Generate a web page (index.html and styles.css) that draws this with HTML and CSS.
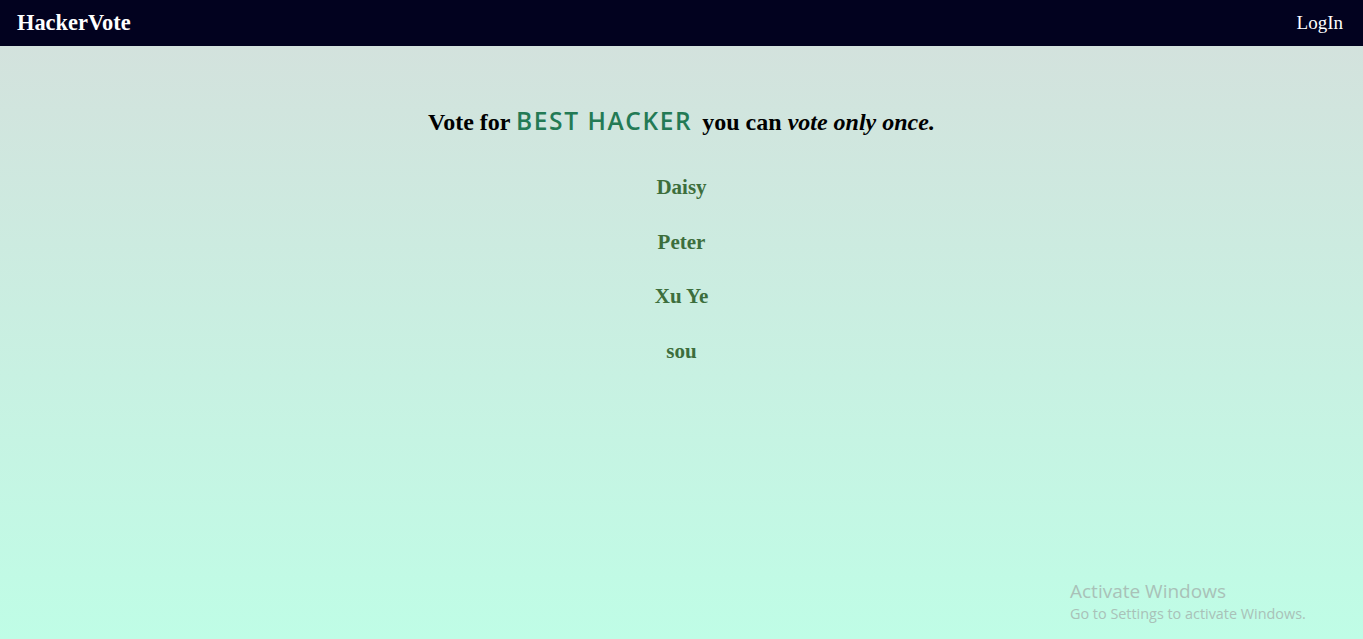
FILE: index.html
```html
<!DOCTYPE html>
<html>
<head>
<meta charset="utf-8">
<link rel="stylesheet" href="styles.css">
</head>
<body>
<nav class="nav">
  <span class="brand">HackerVote</span>
  <span class="login">LogIn</span>
</nav>
<main class="main">
  <h2 class="title">Vote for <span class="best">BEST HACKER</span> you can <em>vote only once.</em></h2>
  <ul class="list">
    <li>Daisy</li>
    <li>Peter</li>
    <li>Xu Ye</li>
    <li>sou</li>
  </ul>
</main>
<div class="activate">
  <div class="a1">Activate Windows</div>
  <div class="a2">Go to Settings to activate Windows.</div>
</div>
</body>
</html>
```
FILE: styles.css
```css
html, body { margin: 0; height: 100%; }
body {
  font-family: "Liberation Serif", "Times New Roman", serif;
  background: linear-gradient(to bottom, #d3e2dd 46px, #bffde6 100%);
  min-height: 639px;
}
.nav {
  height: 46px;
  background: #02021f;
  display: flex;
  align-items: center;
  justify-content: space-between;
  padding: 0 20px 0 17px;
  color: #fff;
  box-sizing: border-box;
}
.brand { font-weight: bold; font-size: 22.4px; }
.login { font-size: 19px; }
.main { text-align: center; padding-top: 58px; }
.title { margin: 0; font-size: 24px; font-weight: bold; color: #000; }
.best {
  font-family: "Comic Sans MS", "Open Sans", sans-serif;
  color: #237a55;
  font-weight: 600;
  font-size: 24.5px;
  letter-spacing: 1.6px;
  margin: 0 4px 0 0;
}
.list { list-style: none; margin: 0; padding: 0; padding-top: 38px; }
.list li { font-size: 21px; font-weight: bold; color: #3d6e3c; line-height: 24px; margin-bottom: 30.5px; }
.activate {
  position: absolute;
  left: 1070px;
  top: 579px;
  font-family: "Open Sans", "Noto Sans", sans-serif;
  color: #a9c1b8;
}
.a1 { font-size: 19px; line-height: 24px; }
.a2 { font-size: 14.4px; line-height: 21px; }
```
